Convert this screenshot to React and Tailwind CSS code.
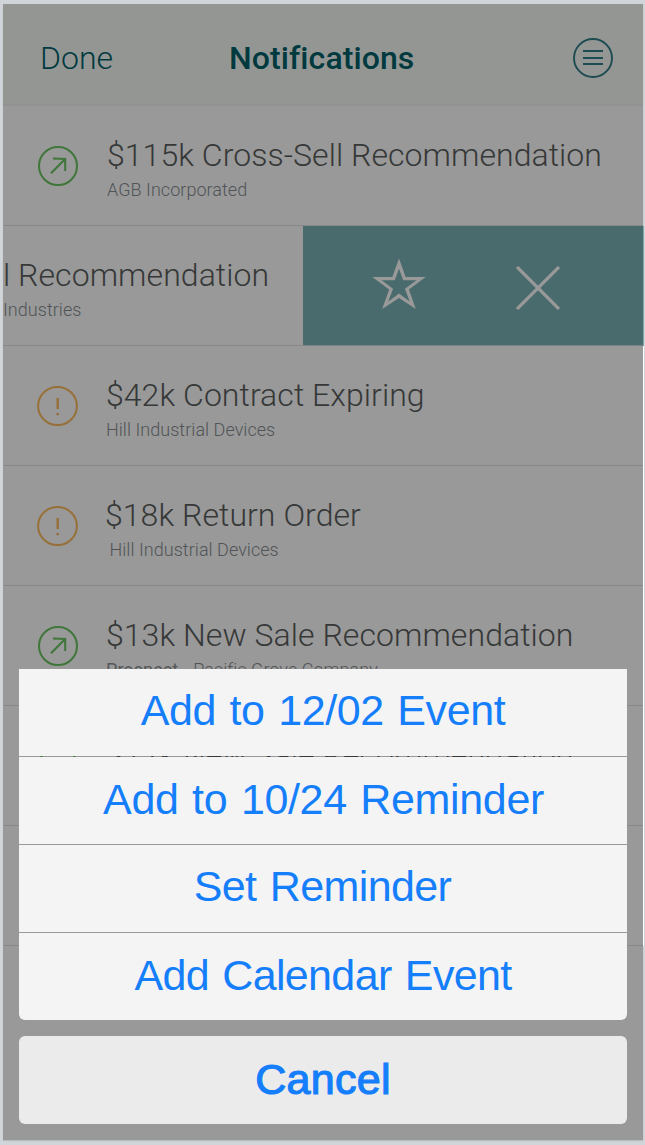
const notifications = [
  { icon: "up", title: "$115k Cross-Sell Recommendation", subtitle: "AGB Incorporated", titlePad: "pl-[107px]", subPad: "pl-[107px]" },
  { swiped: true, title: "l Recommendation", subtitle: "Industries" },
  { icon: "alert", title: "$42k Contract Expiring", subtitle: "Hill Industrial Devices", titlePad: "pl-[106px]", subPad: "pl-[106px]" },
  { icon: "alert", title: "$18k Return Order", subtitle: "Hill Industrial Devices", titlePad: "pl-[105px]", subPad: "pl-[109.5px]" },
  { icon: "up", title: "$13k New Sale Recommendation", prefix: "Prospect", subtitle: "Pacific Grove Company", titlePad: "pl-[106px]", subPad: "pl-[106px]" },
  { icon: "up", title: "$12k New Sale Recommendation", titlePad: "pl-[106px]", subPad: "pl-[106px]" },
  {},
];

const actions = [
  { label: "Add to 12/02 Event", text: "pt-[12px] tracking-[-0.4px] [word-spacing:2px]" },
  { label: "Add to 10/24 Reminder", text: "pt-[13px] tracking-[-0.35px] [word-spacing:2px] pl-px" },
  { label: "Set Reminder", text: "pt-[12px] tracking-[-0.6px] [word-spacing:2px] pr-px" },
  { label: "Add Calendar Event", text: "pt-[13px] tracking-[-0.65px] [word-spacing:2px]" },
];

function MenuIcon() {
  return (
    <svg width="40" height="40" viewBox="0 0 40 40" fill="none" stroke="#1c4b51" strokeWidth="1.9">
      <circle cx="20" cy="20" r="19" />
      <path d="M10 13h20M10 20h20M10 26h20" />
    </svg>
  );
}

function UpIcon() {
  return (
    <svg width="40" height="40" viewBox="0 0 40 40" fill="none" stroke="#3f7639" strokeWidth="2">
      <circle cx="20" cy="20" r="19" />
      <path d="M13 27.3L27 13.3M15 12.4L27.2 13V25" />
    </svg>
  );
}

function AlertIcon() {
  return (
    <svg width="41" height="40" viewBox="0 0 41 40" fill="none" stroke="#967038" strokeWidth="2">
      <ellipse cx="20.5" cy="20" rx="19.4" ry="19" />
      <path d="M20.7 12v11M20.7 27v2.2" strokeWidth="2.4" />
    </svg>
  );
}

function StarIcon() {
  return (
    <svg className="h-[52px] w-[54px]" viewBox="372 258 54 52">
      <path
        fill="#999999"
        fillRule="evenodd"
        d="M399 258.5L405.7 277H425.7L408.9 289.6L415.8 309L399 298L382.2 309L389.1 289.6L372.3 277H392.3ZM399 268.7L394.8 280.2H381.5L393.1 288.7L388.3 301.6L399 293.6L409.7 301.6L404.9 288.7L416.5 280.2H403.2Z"
      />
    </svg>
  );
}

function CloseIcon() {
  return (
    <svg className="h-[44px] w-[44px]" viewBox="0 0 44 44" stroke="#999999" strokeWidth="3.2">
      <path d="M1 1L43 43M43 1L1 43" />
    </svg>
  );
}

function Row({ item }) {
  return (
    <div className="relative flex h-[120px] shrink-0">
      {item.icon && (
        <div className="absolute left-[35px] top-[40px]">
          {item.icon === "up" ? <UpIcon /> : <div className="-ml-px"><AlertIcon /></div>}
        </div>
      )}
      <div className="-ml-[3px] flex min-w-0 flex-1 flex-col pt-[29px] whitespace-nowrap">
        <div className={`text-[32px] leading-[40px] font-light tracking-[0.06px] text-[#363838] ${item.titlePad ?? ""}`}>{item.title}</div>
        <div className={`mt-[3px] text-[18px] leading-[24px] font-light tracking-[0.04px] text-[#505457] ${item.subPad ?? ""}`}>
          {item.prefix && <span className="mr-[15px] font-normal text-[#555859]">{item.prefix}</span>}
          {item.subtitle}
        </div>
      </div>
      <div className="absolute bottom-0 left-px right-0 h-px bg-[#878787]" />
    </div>
  );
}

function SwipedRow({ item }) {
  return (
    <div className="-mr-px flex h-[120px] shrink-0">
      <div className="flex h-[120px] w-[300px] flex-col overflow-hidden border-b border-[#878787] pt-[29px] whitespace-nowrap">
        <div className="text-[32px] leading-[40px] font-light tracking-[0.06px] text-[#363838]">{item.title}</div>
        <div className="mt-[3px] text-[18px] leading-[24px] font-light tracking-[0.04px] text-[#505457]">{item.subtitle}</div>
      </div>
      <div className="flex h-[120px] flex-1 border-r border-b border-r-[#7fa9ac] border-b-[#7b8484] bg-[#4a6b6d]">
        <div className="pt-[32px] pl-[69px]"><StarIcon /></div>
        <div className="pt-[39.5px] pl-[89.5px]"><CloseIcon /></div>
      </div>
    </div>
  );
}

export default function App() {
  return (
    <div className="h-[1145px] w-[645px] overflow-hidden bg-[#cfd5d8] pt-1 pl-[3px] font-['Roboto',sans-serif]">
      <div className="relative flex h-[1136px] w-[640px] flex-col bg-[#999999] shadow-[0_1px_1px_#b8bebf]">
        <header className="flex h-[102px] shrink-0 justify-between border-b-2 border-[#919191] bg-[#949694] pt-[34px] pr-[30px] pl-[37px] text-[32px] leading-[40px] text-[#003a3f]">
          <div className="w-[160px] font-light">Done</div>
          <h1 className="flex-1 pl-[29px] font-medium tracking-[0.08px]">Notifications</h1>
          <MenuIcon />
        </header>
        <main className="flex flex-col">
          <Row item={notifications[0]} />
          <SwipedRow item={notifications[1]} />
          <div className="-mr-px flex flex-col border-r border-white">
            {notifications.slice(2).map((item, i) => <Row key={i} item={item} />)}
          </div>
        </main>

        <div className="absolute bottom-4 left-4 flex w-[608px] flex-col gap-4 text-center font-['Liberation_Sans',Arial,sans-serif] text-[43px] leading-[58px] text-[#147efb]">
          <div className="flex flex-col gap-px overflow-hidden rounded-b-[6px]">
            {actions.map((a) => (
              <div key={a.label} className={`h-[87px] bg-[#f4f4f4] ${a.text}`}>{a.label}</div>
            ))}
          </div>
          <div className="h-[88px] rounded-[6px] bg-[#ebebeb] pt-[14px] tracking-[0.3px] [-webkit-text-stroke:1.2px_#147efb]">Cancel</div>
        </div>
      </div>
    </div>
  );
}
